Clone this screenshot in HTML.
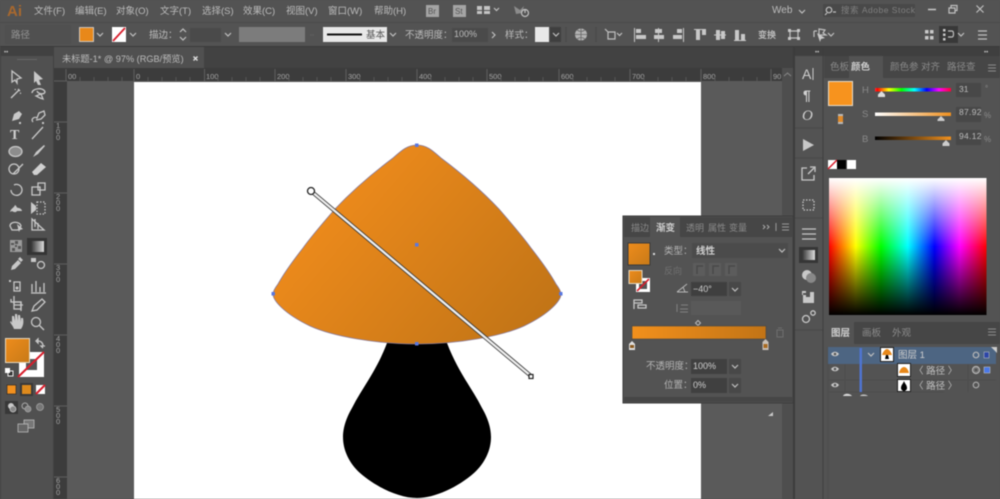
<!DOCTYPE html>
<html><head><meta charset="utf-8"><style>
html,body{margin:0;padding:0;background:#535353;width:1000px;height:499px;overflow:hidden}
svg{display:block;filter:blur(.5px)}
text{font-family:"Liberation Sans","Noto Sans CJK SC",sans-serif;font-size:9.5px;fill:#bcbcbc}
.d{fill:#8a8a8a}
.r{font-size:7.500px;fill:#a4a4a4}
.i{fill:none;stroke:#c8c8c8;stroke-width:1.3}
.f{fill:#c8c8c8}
.c{fill:none;stroke:#c0c0c0;stroke-width:1.2}
</style></head><body>
<svg width="1000" height="499" viewBox="0 0 1000 499" xmlns="http://www.w3.org/2000/svg">
<defs>
<linearGradient id="cap" gradientUnits="userSpaceOnUse" x1="311" y1="191" x2="531" y2="376"><stop offset="0" stop-color="#f08c1c"/><stop offset="1" stop-color="#bd7216"/></linearGradient>
<linearGradient id="bar"><stop offset="0" stop-color="#f2901c"/><stop offset="1" stop-color="#c27416"/></linearGradient>
<linearGradient id="sw" x1="0" y1="0" x2="1" y2="1"><stop offset="0" stop-color="#ee8c1c"/><stop offset="1" stop-color="#c87a18"/></linearGradient>
<linearGradient id="rb"><stop offset="0" stop-color="#f00"/><stop offset=".17" stop-color="#ff0"/><stop offset=".33" stop-color="#0f0"/><stop offset=".5" stop-color="#0ff"/><stop offset=".67" stop-color="#00f"/><stop offset=".83" stop-color="#f0f"/><stop offset="1" stop-color="#f00"/></linearGradient>
<linearGradient id="hue"><stop offset="0" stop-color="#f33"/><stop offset=".03" stop-color="#f00"/><stop offset=".18" stop-color="#ff0"/><stop offset=".35" stop-color="#0f0"/><stop offset=".52" stop-color="#0ff"/><stop offset=".68" stop-color="#00f"/><stop offset=".84" stop-color="#f0f"/><stop offset="1" stop-color="#f03"/></linearGradient>
<linearGradient id="vv" x1="0" y1="0" x2="0" y2="1"><stop offset="0" stop-color="#fff"/><stop offset=".5" stop-color="#fff" stop-opacity="0"/><stop offset=".5" stop-color="#000" stop-opacity="0"/><stop offset="1" stop-color="#000"/></linearGradient>
<linearGradient id="s1"><stop offset="0" stop-color="#fff"/><stop offset="1" stop-color="#f0901e"/></linearGradient>
<linearGradient id="s2"><stop offset="0" stop-color="#000"/><stop offset="1" stop-color="#f0901e"/></linearGradient>
<linearGradient id="gt"><stop offset="0" stop-color="#333"/><stop offset="1" stop-color="#ddd"/></linearGradient>
</defs>

<!-- base -->
<rect width="1000" height="499" fill="#535353"/>
<rect y="22" width="1000" height="1" fill="#4a4a4a"/>
<rect y="46" width="1000" height="1" fill="#3a3a3a"/>
<rect x="0" y="47" width="795" height="21" fill="#424242"/>
<rect x="54" y="47" width="150" height="21" fill="#505050"/>
<rect x="54" y="68" width="740" height="13" fill="#3c3c3c"/>
<rect x="54" y="68" width="13" height="431" fill="#3c3c3c"/>
<rect x="67" y="81" width="715" height="418" fill="#5a5a5a"/>
<rect x="782" y="68" width="11" height="431" fill="#4e4e4e"/>
<rect x="793" y="47" width="2" height="452" fill="#3c3c3c"/>

<!-- left toolbar -->
<rect x="0" y="47" width="54" height="452" fill="#414141"/>
<rect x="1" y="56" width="52" height="443" fill="#505050"/>
<rect x="17" y="59" width="20" height="1" fill="#666"/>
<text x="4" y="54" style="font-size:6px">••</text>

<!-- rulers -->
<text class="r" x="68" y="79">00</text><text class="r" x="136" y="79">0</text><text class="r" x="206" y="79">100</text><text class="r" x="277" y="79">200</text><text class="r" x="348" y="79">300</text><text class="r" x="419" y="79">400</text><text class="r" x="489" y="79">500</text><text class="r" x="561" y="79">600</text><text class="r" x="632" y="79">700</text><text class="r" x="703" y="79">800</text><text class="r" x="773" y="79">90</text>
<path d="M66 69V81M134 69V81M204.500 69V81M275 69V81M346 69V81M417 69V81M487 69V81M559 69V81M630 69V81M701 69V81M771 69V81M54 81H67M54 122H67M54 193H67M54 264H67M54 335H67M54 406H67M54 477H67" stroke="#5e5e5e" stroke-width="1" fill="none"/>
<path d="M80 77V81M94 77V81M108 77V81M122 77V81M148 77V81M162 77V81M176 77V81M190 77V81M218 77V81M232 77V81M246 77V81M260 77V81M289 77V81M303 77V81M317 77V81M331 77V81M360 77V81M374 77V81M388 77V81M402 77V81M431 77V81M445 77V81M459 77V81M473 77V81M501 77V81M515 77V81M529 77V81M543 77V81M573 77V81M587 77V81M601 77V81M615 77V81M644 77V81M658 77V81M672 77V81M686 77V81M715 77V81M729 77V81M743 77V81M757 77V81" stroke="#555" stroke-width="1" fill="none"/>
<text class="r" x="56" y="128">1</text><text class="r" x="56" y="134">0</text><text class="r" x="56" y="140">0</text>
<text class="r" x="56" y="199">2</text><text class="r" x="56" y="205">0</text><text class="r" x="56" y="211">0</text>
<text class="r" x="56" y="270">3</text><text class="r" x="56" y="276">0</text><text class="r" x="56" y="282">0</text>
<text class="r" x="56" y="341">4</text><text class="r" x="56" y="347">0</text><text class="r" x="56" y="353">0</text>
<text class="r" x="56" y="412">5</text><text class="r" x="56" y="418">0</text><text class="r" x="56" y="424">0</text>
<text class="r" x="56" y="483">6</text><text class="r" x="56" y="489">0</text><text class="r" x="56" y="495">0</text>

<!-- artboard -->
<rect x="134" y="82" width="567" height="417" fill="#fff"/>
<path d="M387 343C376 372 362 388 352 408C345 420 343 430 343 437C343 450 349 463 360 473C376 487 399 498 417 498C435 498 458 487 474 473C485 463 491 450 491 437C491 430 489 420 482 408C472 388 458 372 447 343Z" fill="#000"/>
<path d="M417 145C407 145 401 151 393 158C373 173 353 190 335 209C322 224 310 238 303 248C292 262 283 275 278 284C275 288 273 291 273 294C273 300 283 313 310 326C332 336 375 344 417 344C459 344 502 336 524 326C551 313 561 300 561 294C561 291 559 288 556 284C551 275 542 262 531 248C524 238 512 224 499 209C481 190 461 173 441 158C433 151 427 145 417 145Z" fill="url(#cap)" stroke="#8a7a9a" stroke-width=".8"/>
<g fill="#5a78e0"><rect x="415" y="143.500" width="3.500" height="3.500"/><rect x="271.500" y="292" width="3.500" height="3.500"/><rect x="559" y="292" width="3.500" height="3.500"/><rect x="415" y="342" width="3.500" height="3.500"/><rect x="415" y="243" width="3.500" height="3.500"/></g>
<path d="M311 191L531 376" stroke="#333" stroke-width="4"/>
<path d="M311 191L531 376" stroke="#eee" stroke-width="2.400"/>
<circle cx="311" cy="191" r="3.500" fill="#fff" stroke="#222" stroke-width="1.300"/>
<rect x="529" y="374.500" width="4" height="4" fill="#fff" stroke="#222" stroke-width="1.200"/>

<!-- menu bar -->
<text x="7" y="16" style="font-size:15px;font-weight:bold;fill:#a8682e">Ai</text>
<text x="34" y="14">文件(F)</text><text x="75" y="14">编辑(E)</text><text x="116" y="14">对象(O)</text><text x="160" y="14">文字(T)</text><text x="202" y="14">选择(S)</text><text x="243" y="14">效果(C)</text><text x="286" y="14">视图(V)</text><text x="328" y="14">窗口(W)</text><text x="374" y="14">帮助(H)</text>
<rect x="426" y="5" width="13" height="12" fill="#a4a4a4"/><text x="428" y="14" style="font-size:8px;fill:#555">Br</text>
<rect x="453" y="5" width="13" height="12" fill="#a4a4a4"/><text x="455" y="14" style="font-size:8px;fill:#555">St</text>
<path d="M477 6h5v4h-5zM484 6h6v4h-6zM477 11h5v3h-5zM484 11h6v3h-6z" fill="#c4c4c4"/>
<path d="M494 8l2.500 2.500 2.500-2.500" class="c"/>
<path d="M514 6l6 4 4-4-2 7-6 1z" fill="#8c8c8c"/><circle cx="525" cy="13" r="3.500" class="c"/><path d="M525 10v3" class="c"/>
<text x="772" y="13" style="font-size:10px">Web</text><path d="M799 10l3 3 3-3" class="c"/>
<rect x="823" y="4" width="92" height="13" rx="1" fill="#494949"/>
<circle cx="829" cy="10" r="2.800" class="c"/><path d="M827 13l-2 2M833 12h3" class="c"/>
<text x="841" y="13" style="font-size:8.500px;fill:#808080;letter-spacing:.5px">搜索 Adobe Stock</text>
<path d="M928 9.500h8" stroke="#c8c8c8" stroke-width="1.500"/>
<path d="M949 8h6v5h-6zM951 8V5.500h6v5h-2" class="c" fill="none"/>
<path d="M976.500 5.500l7 7M983.500 5.500l-7 7" class="c" stroke-width="1.600"/>

<!-- control bar -->
<rect x="5" y="25" width="66" height="19" fill="#505050"/>
<text x="11" y="38" style="fill:#949494">路径</text>
<rect x="79.500" y="27.500" width="14" height="14" fill="#e8881a" stroke="#ddd" stroke-width=".8"/>
<path d="M97 33l3 3 3-3" class="c"/>
<rect x="112" y="27" width="14" height="15" fill="#fff"/><path d="M113 41l12-13" stroke="#d81e2c" stroke-width="1.800"/>
<path d="M130 33l3 3 3-3" class="c"/>
<text x="149" y="38">描边：</text>
<path d="M180 32l3-3 3 3M180 37l3 3 3-3" class="c"/>
<rect x="190" y="28" width="31" height="14" fill="#4a4a4a"/>
<path d="M225 33l3 3 3-3" class="c"/>
<rect x="239" y="27" width="66" height="15" fill="#7c7c7c"/>
<path d="M310 35h4" stroke="#5f5f5f"/>
<rect x="323" y="27" width="64" height="15" fill="#e8e8e8"/>
<rect x="327" y="33.500" width="35" height="2" fill="#111"/>
<text x="366" y="38" style="fill:#555">基本</text>
<path d="M390 33l3 3 3-3" class="c"/>
<text x="405" y="38">不透明度：</text>
<rect x="452" y="28" width="36" height="14" fill="#4a4a4a"/>
<text x="454" y="37" style="font-size:9px">100%</text>
<path d="M492 32l3 3-3 3" class="c"/>
<text x="505" y="38">样式：</text>
<rect x="535" y="27" width="14" height="15" fill="#e8e8e8"/>
<rect x="550" y="27" width="11" height="15" fill="#3f3f3f"/><path d="M553 33l3 3 3-3" class="c"/>
<path d="M566 27v15" stroke="#474747"/>
<circle cx="581" cy="34.500" r="6" fill="#b4b4b4"/><path d="M575 34.500h12M581 28.500v12M577 30c3 2 5 2 8 0M577 39c3-2 5-2 8 0" stroke="#666" fill="none" stroke-width=".8"/>
<path d="M596 27v15" stroke="#474747"/>
<path d="M608 32h7v7h-7zM605 29l3 3" class="c"/><path d="M617 33l2.500 2.500 2.500-2.500" class="c"/>
<g class="f">
<path d="M634 28h1v14h-1z"/><rect x="636" y="29" width="5" height="4"/><rect x="636" y="35" width="10" height="4"/>
<path d="M658 28h1v14h-1z"/><rect x="655" y="29" width="7" height="4"/><rect x="654" y="35" width="10" height="4"/>
<path d="M683 28h1v14h-1z"/><rect x="677" y="29" width="5" height="4"/><rect x="673" y="35" width="9" height="4"/>
<path d="M694 29h12v1h-12z"/><rect x="696" y="30" width="4" height="10"/><rect x="702" y="30" width="4" height="5"/>
<path d="M714 34.500h12v1h-12z"/><rect x="716" y="30" width="4" height="10"/><rect x="721" y="31" width="4" height="8"/>
<path d="M734 40h12v1h-12z"/><rect x="735" y="30" width="4" height="10"/><rect x="741" y="34" width="4" height="6"/>
</g>
<text x="758" y="38" style="font-size:9px;font-weight:bold">变换</text>
<path d="M790 31h8v7h-8z" class="c" stroke-width="1"/><path d="M788 29h3v3h-3zM797 29h3v3h-3zM788 37h3v3h-3zM797 37h3v3h-3z" class="f"/>
<path d="M814 31h3M814 31v6M819 29v6l7 0-3-2 2-3z" class="c" stroke-width="1"/><path d="M817 33l8 5-4 1-1 3z" class="f"/>
<path d="M828 33l3 3 3-3" class="c"/>
<g class="f"><rect x="925" y="30" width="3.500" height="3.500"/><rect x="930" y="30" width="3.500" height="3.500"/><rect x="925" y="36" width="3.500" height="3.500"/><rect x="930" y="36" width="3.500" height="3.500"/></g>
<rect x="939" y="26" width="19" height="17" fill="#383838"/>
<g class="f"><rect x="943" y="29" width="2.500" height="2.500"/><rect x="943" y="33.500" width="2.500" height="2.500"/><rect x="943" y="38" width="2.500" height="2.500"/></g><path d="M948 31h4c2 0 2 6 0 6h-4" class="c"/>
<path d="M958 33l3 3 3-3" class="c"/>
<path d="M978 31h9M978 35h9M978 39h9" class="c" stroke-width="1"/>

<!-- tab -->
<text x="62" y="62" style="font-size:9.200px">未标题-1* @ 97% (RGB/预览)</text>
<path d="M193.500 56.500l4 4M197.500 56.500l-4 4" stroke="#ddd" stroke-width="1.400"/>

<!-- tools -->
<path d="M12 71l9 7-4 1 0 4-2-3-3 2z" class="i"/>
<path d="M34 71l9 8-4 1 2 5-3 0-2-4-2 2z" class="f"/>
<path d="M11 98l8-8" class="i"/><path d="M18 89l2 2M15 90l.5-1M20 93l1 .5" class="i" stroke-width="1"/>
<path d="M32 93c0-5 12-6 13-1-1 3-7 2-8-1M36 96l5-2 2 5-3-1z" class="i"/>
<path d="M12 121l2-7 5-3 3 3-3 5zM14 119l3-3" class="f"/><rect x="19" y="122" width="2" height="2" class="f"/>
<path d="M33 122c-3-3 2-6 4-4l2-5 5-2 1 4-4 4-5 1" class="i"/><rect x="42" y="122" width="2" height="2" class="f"/>
<text x="10" y="139" style="font-size:14px;font-weight:bold;font-family:'Liberation Serif',serif;fill:#cfcfcf">T</text>
<path d="M32 139l11-12" class="i"/>
<ellipse cx="15.500" cy="151.500" rx="6.500" ry="5" fill="#8d8d8d" stroke="#c8c8c8" stroke-width="1.300"/>
<path d="M33 157l3-5 8-7 1 1-7 8z" class="f"/>
<circle cx="14" cy="169" r="5" class="i" fill="#8d8d8d"/><path d="M13 174l10-10" class="i" stroke-width="1.800"/>
<path d="M32 172l9-9 5 4-9 8h-3z" fill="#d0d0d0"/>
<path d="M11 190a5.500 5.500 0 1 0 3-5" class="i" stroke-width="1.600"/>
<path d="M32 187h8v8h-8zM38 183h7v7h-7z" class="i" stroke-width="1"/>
<path d="M10 212c1-4 4-4 5-7 2 1 1 3 4 3 3 1 3 3 3 3l-5 0c-1 2-4 1-5 0z" class="f"/>
<path d="M31 202l5 4v4l-5 4z" class="f"/><path d="M37 202h8v12h-8z" class="i" stroke-dasharray="1.500 1.500" stroke-width="1"/>
<path d="M10 226c0-5 10-5 11 0l-3 4h-6z" class="i"/><path d="M17 224l6 5-3 1-1 2z" class="f"/>
<path d="M32 219v11h12zM35 219v8M38 223v6" class="i" stroke-width="1"/>
<rect x="10" y="240" width="12" height="12" fill="#9a9a9a"/><path d="M11 243h3v2h-3zM15 241h3v3h-3zM18 246h3v3h-3zM12 248h3v3h-3zM15 245h2v2h-2z" fill="#555"/>
<rect x="27" y="238" width="20" height="17" fill="#343434"/><rect x="31" y="241" width="13" height="11" fill="url(#gt)"/>
<path d="M11 270l1-4 6-6 3 3-6 6zM18 259l2-2 3 3-2 2" class="f"/>
<rect x="31" y="258" width="5" height="4" class="f"/><circle cx="41" cy="265" r="3.500" class="i"/>
<rect x="9" y="280" width="2" height="2" class="f"/><path d="M14 282h6v9h-6z" class="i"/><circle cx="17" cy="288" r="1.500" class="f"/>
<path d="M32 292v-8M36 292v-11M40 292v-5M44 292v-9" class="i" stroke-width="2"/><path d="M31 293h15" class="i" stroke-width=".8"/>
<path d="M11 299v3h10v9M14 304v-8M14 305h9" class="i" stroke-width="1.200"/><rect x="14" y="302" width="7" height="7" class="i" stroke-width=".8"/>
<path d="M32 311l2-5 8-7 3 3-8 8z" class="i"/>
<path d="M10 322c1 2 3 4 4 7h7c2-3 3-6 2-11l-2 0v4l-1-7h-2v6l-1-7h-2v7l-1-5h-2v7l-1-2z" class="f"/>
<circle cx="36" cy="322" r="4.500" class="i"/><path d="M39.500 325.500l4.500 4.500" class="i" stroke-width="1.800"/>
<rect x="19" y="352" width="25" height="25" fill="#fff"/><rect x="26" y="359" width="11" height="11" fill="#555"/>
<path d="M18 377l26-25" stroke="#d81e2c" stroke-width="2"/>
<rect x="5.500" y="338.500" width="24" height="24" fill="url(#sw)" stroke="#e6d8c0" stroke-width="1"/>
<path d="M38 341c3 0 5 2 5 5M38 339v4l-2-2zM45 346h-4l2 2" class="i" stroke-width="1"/>
<rect x="8" y="371" width="5" height="5" fill="#333" stroke="#eee"/><rect x="5" y="368" width="5" height="5" fill="#fff"/>
<rect x="7" y="385" width="9" height="9" fill="#f2901e" stroke="#222" stroke-width=".6"/>
<rect x="20" y="383" width="13" height="13" fill="#393939"/><rect x="22" y="385" width="9" height="9" fill="#de8a1c"/>
<rect x="36" y="385" width="9" height="9" fill="#fff"/><path d="M36 394l9-9" stroke="#d81e2c" stroke-width="2"/>
<rect x="5" y="401" width="13" height="13" fill="#383838"/>
<circle cx="11" cy="406" r="3" class="f"/><circle cx="13" cy="409" r="3" fill="#888" stroke="#ccc" stroke-width=".7"/>
<circle cx="25" cy="406" r="3" fill="none" stroke="#aaa"/><circle cx="28" cy="409" r="3" fill="#888" stroke="#aaa" stroke-width=".7"/>
<circle cx="40" cy="407" r="3.500" fill="#777" stroke="#aaa" stroke-width=".7"/>
<rect x="24" y="420" width="10" height="8" fill="#777" stroke="#bbb" stroke-width=".8"/><rect x="18" y="424" width="10" height="8" fill="#666" stroke="#bbb" stroke-width=".8"/>

<!-- scrollbar -->
<path d="M784 76l3.500-3 3.500 3" stroke="#888" fill="none"/>

<!-- right icon dock -->
<rect x="795" y="47" width="28" height="452" fill="#535353"/>
<rect x="795" y="47" width="205" height="9" fill="#3f3f3f"/>
<path d="M795 128h28M795 158h28M795 218h28M795 330h28" stroke="#474747"/>
<rect x="822.500" y="47" width="1" height="452" fill="#3e3e3e"/>
<text x="802" y="79" style="font-size:14px;fill:#cfcfcf">A</text><path d="M813 68v12" stroke="#ccc"/>
<text x="803" y="100" style="font-size:14px;font-weight:bold;fill:#cfcfcf">¶</text>
<text x="802" y="120" style="font-size:15px;font-style:italic;font-family:'Liberation Serif',serif;fill:#cfcfcf">O</text>
<path d="M803 139l11 6-11 6z" class="f"/>
<path d="M807 168h-5v12h12v-5M808 174l6-6M810 167h5v5" class="i" stroke-width="1.500"/>
<rect x="803" y="200" width="11" height="10" class="i" stroke-dasharray="1.500 1.500" stroke-width="1.500"/>
<path d="M802 229h14M802 234h14M802 239h14" class="i" stroke-width="1.600"/>
<rect x="799" y="247" width="19" height="16" fill="#363636"/><rect x="802" y="250" width="13" height="10" fill="url(#gt)"/>
<circle cx="807" cy="275" r="5" fill="#c8c8c8"/><circle cx="811" cy="278" r="5" fill="#888"/>
<path d="M803 293v10h11v-11h-4v5h-4v-4zM802 291h4v4h-4z" class="f"/>
<circle cx="806" cy="319" r="3.500" class="i" stroke-width="2"/><circle cx="813" cy="313" r="2.200" class="i" stroke-width="1.300"/>
<text x="815" y="54" style="font-size:6px">••</text><text x="984" y="54" style="font-size:6px">••</text>

<!-- colour panel -->
<rect x="824" y="56" width="176" height="22" fill="#464646"/>
<rect x="849" y="56" width="34" height="22" fill="#535353"/>
<text x="830" y="70" style="fill:#8a8a8a">色板</text><text x="851" y="70" style="font-weight:bold;fill:#d0d0d0">颜色</text>
<text x="890" y="70" style="fill:#8a8a8a">颜色参</text><text x="921" y="70" style="fill:#8a8a8a">对齐</text><text x="947" y="70" style="fill:#8a8a8a">路径查</text>
<path d="M988 65h8M988 68h8M988 71h8" stroke="#8a8a8a"/>
<rect x="828.500" y="81.500" width="24" height="24" fill="#f7931e" stroke="#e8dcc8"/>
<path d="M838 114h5v10h-5z" fill="#b8b8b8"/><rect x="838" y="116" width="5" height="6" fill="#e08a2a"/>
<text x="862" y="93" class="d">H</text><text x="862" y="117" class="d">S</text><text x="862" y="142" class="d">B</text>
<rect x="875" y="88" width="76" height="3.500" fill="url(#hue)"/>
<rect x="875" y="112.500" width="76" height="3.500" fill="url(#s1)"/>
<rect x="875" y="136.500" width="76" height="3.500" fill="url(#s2)"/>
<path d="M881.500 91l3.500 3.500V97h-7v-2.500z" fill="#ddd"/><path d="M941 116l3.500 3.500V121h-7v-1.500z" fill="#ccc"/><path d="M946 140l3.500 3.500V146h-7v-2.500z" fill="#ccc"/>
<rect x="956" y="83" width="25" height="14" fill="#484848"/><rect x="956" y="107" width="25" height="15" fill="#484848"/><rect x="956" y="130" width="25" height="15" fill="#484848"/>
<text x="959" y="92" style="font-size:8.500px">31</text><text x="959" y="115" style="font-size:8.500px;letter-spacing:.3px">87.92</text><text x="959" y="139" style="font-size:8.500px;letter-spacing:.3px">94.12</text>
<text x="985" y="91" class="d" style="font-size:8px">°</text><text x="984" y="118" class="d" style="font-size:8px">%</text><text x="984" y="142" class="d" style="font-size:8px">%</text>
<rect x="828" y="160" width="9" height="9" fill="#fff"/><path d="M828 169l9-9" stroke="#d81e2c" stroke-width="1.500"/>
<rect x="837" y="160" width="9" height="9" fill="#000"/><rect x="847" y="160" width="9" height="9" fill="#fff"/>
<rect x="829" y="178" width="157.500" height="137" fill="url(#rb)"/>
<rect x="829" y="178" width="157.500" height="137" fill="url(#vv)"/>

<!-- layers panel -->
<rect x="824" y="322" width="176" height="22" fill="#464646"/>
<rect x="824" y="322" width="30" height="22" fill="#535353"/>
<text x="831" y="336" style="font-weight:bold;fill:#d0d0d0">图层</text><text x="862" y="336" style="fill:#8a8a8a">画板</text><text x="892" y="336" style="fill:#8a8a8a">外观</text>
<path d="M988 329h8M988 332h8M988 335h8" stroke="#8a8a8a"/>
<path d="M828 347v152" stroke="#4c4c4c"/>
<rect x="828" y="347" width="168" height="17" fill="#4d6582"/>
<path d="M845 364v28M828 380h168M828 392h116M968 364v28" stroke="#4e4e4e"/>
<path d="M831 354c2-3 6-3 8 0-2 3-6 3-8 0z" fill="#c8c8c8"/><circle cx="835" cy="354" r="1.300" fill="#555"/>
<path d="M831 369c2-3 6-3 8 0-2 3-6 3-8 0z" fill="#c8c8c8"/><circle cx="835" cy="369" r="1.300" fill="#555"/>
<path d="M831 385c2-3 6-3 8 0-2 3-6 3-8 0z" fill="#c8c8c8"/><circle cx="835" cy="385" r="1.300" fill="#555"/>
<rect x="859.500" y="348" width="2.500" height="44" fill="#4f74d0"/>
<path d="M868 353l3 3 3-3" class="c"/>
<rect x="880.500" y="347.500" width="13" height="14" fill="#fff" stroke="#222"/><path d="M882 355c1-3 3-6 5-6s4 3 5 6z" fill="#e8881a"/><path d="M886 355h2l1 4h-4z" fill="#000"/>
<text x="898" y="358" style="font-size:9.500px;fill:#d0d0d0">图层 1</text>
<circle cx="976" cy="355" r="2.800" fill="none" stroke="#b8b8b8" stroke-width="1.200"/>
<rect x="984" y="352" width="5" height="6" fill="#2c45a8" stroke="#ccc" stroke-width=".5"/>
<path d="M991 347l6 0 0 6z" fill="#ccc"/>
<rect x="897.500" y="363.500" width="13" height="13" fill="#fff" stroke="#222"/><path d="M899 373c1-4 3-6 5-6s4 2 5 6z" fill="#e8881a"/>
<text x="914" y="374" style="font-size:9.500px;fill:#c0c0c0">〈 路径 〉</text>
<circle cx="976" cy="370" r="3.500" fill="none" stroke="#b8b8b8" stroke-width="1.200"/><circle cx="976" cy="370" r="2" fill="none" stroke="#888" stroke-width=".8"/>
<rect x="984" y="367" width="6" height="6" fill="#4a78e8" stroke="#ccc" stroke-width=".5"/>
<rect x="897.500" y="379.500" width="13" height="12" fill="#fff" stroke="#222"/><path d="M904 381c-1 3-3 4-3 7 0 2 2 3 3 3s3-1 3-3c0-3-2-4-3-7z" fill="#000"/>
<text x="914" y="389" style="font-size:9.500px;fill:#c0c0c0">〈 路径 〉</text>
<circle cx="976" cy="385" r="2.800" fill="none" stroke="#b0b0b0" stroke-width="1.100"/>
<path d="M843 396c1-3 7-3 9 0z" fill="#d8d8d8"/><path d="M860 396c1-2 6-2 8 0z" fill="#c8c8c8"/>

<!-- gradient panel -->
<rect x="623" y="216" width="170" height="187" fill="#535353" stroke="#3d3d3d"/>
<rect x="624" y="217" width="169" height="20" fill="#464646"/>
<rect x="650" y="217" width="30" height="20" fill="#535353"/>
<rect x="624" y="397" width="169" height="5" fill="#464646"/>
<text x="631" y="231" style="font-size:9px;fill:#8a8a8a">描边</text><text x="656" y="231" style="font-weight:bold;fill:#d0d0d0">渐变</text><text x="686" y="231" style="font-size:9px;fill:#8a8a8a">透明</text><text x="708" y="231" style="font-size:9px;fill:#8a8a8a">属性</text><text x="729" y="231" style="font-size:9px;fill:#8a8a8a">变量</text>
<path d="M763 225l2 2-2 2M767 225l2 2-2 2" stroke="#aaa" fill="none"/><path d="M776 223v8" stroke="#999"/><path d="M782 224h7M782 227h7M782 230h7" stroke="#999"/>
<rect x="628" y="243" width="22" height="22" fill="url(#sw)" stroke="#3a3a3a"/>
<rect x="653" y="253" width="2" height="2" fill="#ddd"/>
<text x="664" y="254" style="fill:#b4b4b4">类型：</text>
<rect x="692" y="243" width="96" height="15" fill="#4b4b4b"/>
<text x="696" y="254" style="font-weight:bold;fill:#d0d0d0">线性</text>
<path d="M779 249l3 3 3-3" class="c"/>
<rect x="636" y="278" width="14" height="14" fill="#fff"/><rect x="639" y="281" width="8" height="8" fill="#555"/><path d="M637 291l12-12" stroke="#d81e2c" stroke-width="1.600"/>
<rect x="629" y="270.500" width="13" height="13" fill="url(#sw)" stroke="#e6d8c0"/>
<path d="M634 300h8v3h-8zM638 305h8v3h-8zM634 300v9" class="i" stroke-width="1"/>
<text x="664" y="274" style="font-size:9px;fill:#707070">反向</text>
<rect x="693" y="263" width="12" height="13" fill="#5c5c5c"/><rect x="709" y="263" width="12" height="13" fill="#5c5c5c"/><rect x="725" y="263" width="12" height="13" fill="#5c5c5c"/>
<path d="M697 274v-8h6M713 274v-8h6M729 274v-8h6" stroke="#484848" fill="none" stroke-width="1.500"/>
<path d="M677 292l10-8M677 292h11M683 287l2 5" stroke="#b8b8b8" fill="none"/>
<rect x="691" y="282" width="36" height="14" fill="#3f3f3f"/>
<text x="693" y="292" style="font-size:9px;fill:#cfcfcf">−40°</text>
<rect x="729" y="282" width="12" height="14" fill="#484848"/><path d="M732 288l3 3 3-3" class="c"/>
<path d="M677 304v8M680 309h8M680 312h8M681 305h7" stroke="#808080" fill="none"/>
<rect x="691" y="301" width="50" height="14" fill="#595959"/>
<path d="M698 320.500l2.500 2.500-2.500 2.500-2.500-2.500z" fill="none" stroke="#bbb"/>
<rect x="632" y="326" width="134" height="13" fill="url(#bar)" stroke="#444" stroke-width=".6"/>
<path d="M632 341l3 3v6h-6v-6z" fill="#e0e0e0"/><rect x="630" y="345" width="4" height="3" fill="#8a5a20"/>
<path d="M765.500 339l3 3v8h-6v-8z" fill="#c8c0b8"/><rect x="763.500" y="344" width="4" height="4" fill="#a86a20"/>
<path d="M777 330h6v7h-6zM778 328h4" stroke="#6e6e6e" fill="none"/>
<text x="646" y="369" style="fill:#b4b4b4">不透明度：</text>
<rect x="691" y="359" width="36" height="15" fill="#404040"/><text x="693" y="369" style="font-size:9px;fill:#cfcfcf">100%</text>
<rect x="729" y="359" width="12" height="15" fill="#484848"/><path d="M732 365l3 3 3-3" class="c"/>
<text x="664" y="388" style="fill:#b4b4b4">位置：</text>
<rect x="691" y="378" width="36" height="15" fill="#404040"/><text x="693" y="388" style="font-size:9px;fill:#cfcfcf">0%</text>
<rect x="729" y="378" width="12" height="15" fill="#484848"/><path d="M732 384l3 3 3-3" class="c"/>
<path d="M768 416l5-4v4z" fill="#c8c8c8"/>
</svg>
</body></html>
